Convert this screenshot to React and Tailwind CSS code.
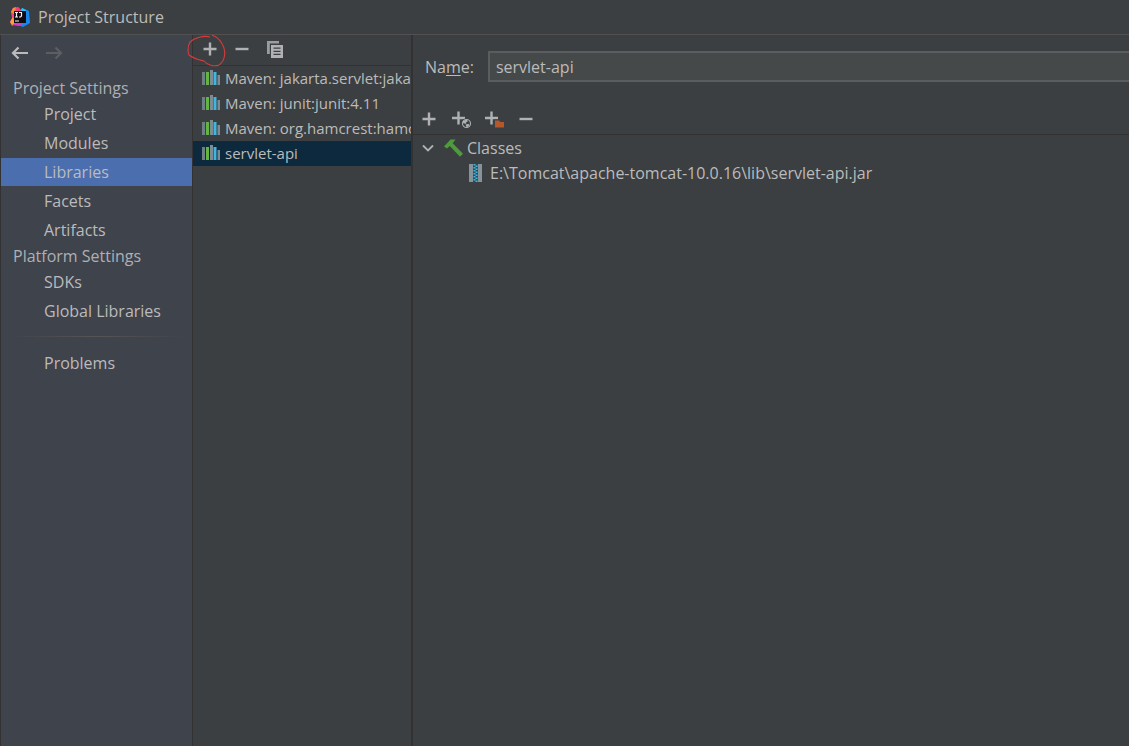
import React, { useState } from "react";
import clsx from "clsx";

const projectSettings = ["Project", "Modules", "Libraries", "Facets", "Artifacts"];
const platformSettings = ["SDKs", "Global Libraries"];
const libraries = [
    "Maven: jakarta.servlet:jakarta.servlet-api:5.0.0",
    "Maven: junit:junit:4.11",
    "Maven: org.hamcrest:hamcrest-core:1.3",
    "servlet-api",
];

function Logo() {
    return (
        <svg width="20" height="20" viewBox="0 0 20 20" aria-hidden="true">
            <path d="M1 5 L3 1 L8 0 L12 4 L9 16 L2 19 L0 15 L2 11 Z" fill="#f0468c" />
            <path d="M1 5 L3 1 L6 0 L4 7 Z" fill="#fc8a3c" />
            <path d="M3 10 L0 15 L2 18 L5 16 Z" fill="#f9a13a" />
            <path d="M8 0 L12 5 L4 8 Z" fill="#fb3a75" />
            <path d="M12 1 L19 4 L20 16 L13 20 L5 17 L9 8 Z" fill="#1687ee" />
            <path d="M12 1 L16 3 L16 5 L10 5 Z" fill="#24c4f5" />
            <path d="M5 16 L14 16 L9 19 L3 18 Z" fill="#d63bc8" />
            <path d="M4 4 H16 V16 H4 Z" fill="#120b12" />
            <path d="M5 5.5 H8 M6.5 5.5 V10 M5 10 H8 M9 5.5 H12 M11.5 5.5 V9 L10.5 10 H9 M5 14 H9" fill="none" stroke="#f4f4f4" strokeWidth="1.2" />
        </svg>
    );
}

function Arrow({ flip }) {
    return (
        <svg width="18" height="14" viewBox="0 0 18 14" className={flip ? "rotate-180" : ""} aria-hidden="true">
            <path d="M17 7 H2 M7.5 1.5 L2 7 L7.5 12.5" fill="none" stroke="currentColor" strokeWidth="2.2" />
        </svg>
    );
}

function Plus() {
    return (
        <svg width="14" height="14" viewBox="0 0 14 14" aria-hidden="true">
            <path d="M0.5 7 H13.5 M7 0.5 V13.5" stroke="#afb1b3" strokeWidth="2.4" />
        </svg>
    );
}

function Minus() {
    return (
        <svg width="14" height="14" viewBox="0 0 14 14" aria-hidden="true">
            <path d="M0.5 7 H13.5" stroke="#afb1b3" strokeWidth="2.4" />
        </svg>
    );
}

function Copy() {
    return (
        <svg width="16" height="17" viewBox="0 0 16 17" aria-hidden="true">
            <path d="M0 0 H12 V2.5 H2.8 V13 H0 Z" fill="#9a9da0" />
            <path d="M4 4 H16 V17 H4 Z" fill="#afb1b3" />
            <path d="M6.5 7.2 H13.5 M6.5 10.3 H13.5 M6.5 13.4 H13.5" stroke="#3c3f41" strokeWidth="1.3" />
        </svg>
    );
}

function PlusGlobe() {
    return (
        <svg width="20" height="20" viewBox="0 0 20 20" aria-hidden="true">
            <path d="M0 9 H13 M6.5 2.5 V15.5" stroke="#afb1b3" strokeWidth="2.4" />
            <circle cx="14.5" cy="14.5" r="5.2" fill="#3c3f41" />
            <circle cx="14.5" cy="14.5" r="4" fill="none" stroke="#afb1b3" strokeWidth="1.1" />
            <path d="M11 12 L14.5 10.6 L16 12 L14 13.4 L14.3 14.7 L12.4 14.5 L11 13.9 Z M13.6 15.5 L16.5 15.1 L17.6 16.1 L15.2 18.3 L14.2 17.5 Z" fill="#afb1b3" />
        </svg>
    );
}

function PlusFolder() {
    return (
        <svg width="20" height="20" viewBox="0 0 20 20" aria-hidden="true">
            <path d="M0 9 H13 M6.5 2.5 V15.5" stroke="#afb1b3" strokeWidth="2.4" />
            <path d="M9 10.5 H15 L16 12 H20 V20 H9 Z" fill="#3c3f41" />
            <path d="M10 11.5 H14 L15.5 13 H19 V18.5 H10 Z" fill="#b3572c" />
        </svg>
    );
}

function Books() {
    return (
        <svg width="18" height="16" viewBox="0 0 18 16" className="shrink-0" aria-hidden="true">
            <path d="M0 2 H3 V15 H0 Z" fill="#6e7d86" />
            <path d="M4 2 H7 V15 H4 Z" fill="#62b543" />
            <path d="M8 0 H11 V15 H8 Z" fill="#7f8b92" />
            <path d="M11.5 2 H14.5 V15 H11.5 Z" fill="#40b6e0" />
            <path d="M15.5 5 H18 V15 H15.5 Z" fill="#7f8b92" />
        </svg>
    );
}

function Hammer() {
    return (
        <svg width="19" height="18" viewBox="0 0 19 18" aria-hidden="true">
            <path d="M0 7.5 L6.5 0.5 H11.5 L8.7 4.2 L19 14.8 L16 17.7 L5.8 7 L3 9.6 Z" fill="#4f9a3d" />
        </svg>
    );
}

function Archive() {
    return (
        <svg width="13" height="18" viewBox="0 0 13 18" aria-hidden="true">
            <path d="M0 0 H4 V18 H0 Z M9 0 H13 V18 H9 Z" fill="#87939a" />
            <path d="M4 0 H9 V18 H4 Z" fill="#27505f" />
            <path d="M5.5 0 V18" stroke="#40b6e0" strokeWidth="2" strokeDasharray="1.5 1.5" />
            <path d="M7.5 1.5 V18" stroke="#40b6e0" strokeWidth="2" strokeDasharray="1.5 1.5" />
        </svg>
    );
}

function NavItem({ label, selected, onSelect }) {
    return (
        <button
            type="button"
            onClick={() => onSelect(label)}
            className={clsx("flex h-7 w-full items-center pl-[43px] text-left", selected === label && "bg-[#4b6eaf]")}
        >
            {label}
        </button>
    );
}

export default function App() {
    const [section, setSection] = useState("Libraries");
    const [library, setLibrary] = useState("servlet-api");
    const [name, setName] = useState("servlet-api");

    return (
        <div className="flex min-h-screen flex-col bg-[#3c3f41] font-['Open_Sans','Noto_Sans',sans-serif] text-base leading-6 text-[#bbbbbb]">
            <header className="flex h-[35px] items-center gap-2 border-b border-[#515151] pl-2.5">
                <Logo />
                <h1>Project Structure</h1>
            </header>

            <div className="flex flex-1">
                <nav className="w-[193px] shrink-0 border-x border-[#323232] bg-[#3f434c]">
                    <div className="flex h-[41px] items-start gap-4 pt-[11px] pl-2.5">
                        <button type="button" aria-label="Back" className="text-[#bbbbbb]"><Arrow /></button>
                        <button type="button" aria-label="Forward" className="text-[#5c5e61]"><Arrow flip /></button>
                    </div>
                    <h2 className="flex h-6 items-center pl-3 text-[#adb0b5]">Project Settings</h2>
                    <div className="flex flex-col gap-px">
                        {projectSettings.map((label) => (
                            <NavItem key={label} label={label} selected={section} onSelect={setSection} />
                        ))}
                    </div>
                    <h2 className="flex h-6 items-center pl-3 text-[#adb0b5]">Platform Settings</h2>
                    <div className="flex flex-col gap-px">
                        {platformSettings.map((label) => (
                            <NavItem key={label} label={label} selected={section} onSelect={setSection} />
                        ))}
                    </div>
                    <div className="mx-2 mt-[11px] mb-3 h-px bg-linear-to-r from-transparent via-[#555555] to-transparent" />
                    <NavItem label="Problems" selected={section} onSelect={setSection} />
                </nav>

                <section className="w-[220px] shrink-0 border-r-2 border-[#323232]">
                    <div className="relative flex h-[31px] items-center gap-[18px] border-b border-[#323232] pb-0.5 pl-2.5">
                        <button type="button" aria-label="Add library"><Plus /></button>
                        <button type="button" aria-label="Remove library"><Minus /></button>
                        <button type="button" aria-label="Copy library"><Copy /></button>
                        {/* hand-drawn ring around the add button */}
                        <svg width="40" height="34" viewBox="0 0 40 34" className="pointer-events-none absolute -top-px -left-1.5" aria-hidden="true">
                            <path d="M23 3 C17 1 7 4 3 8 C0 13 1 19 2 21 C7 25 13 26 17 27 C20 31 27 33 32 31 C37 28 39 20 37 14 C35 8 30 3 25 1" fill="none" stroke="#d93a3a" strokeWidth="1.1" />
                        </svg>
                    </div>
                    <ul className="text-[15px]">
                        {libraries.map((item) => (
                            <li key={item}>
                                <button
                                    type="button"
                                    onClick={() => setLibrary(item)}
                                    className={clsx("flex h-[25px] w-full items-center gap-[5px] overflow-hidden pb-0.5 pl-[9px] whitespace-nowrap", library === item && "bg-[#0d293e]")}
                                >
                                    <Books />
                                    {item}
                                </button>
                            </li>
                        ))}
                    </ul>
                </section>

                <main className="min-w-0 flex-1">
                    <div className="flex items-center gap-[14px] pt-4 pl-3">
                        <label htmlFor="library-name">
                            Na<u className="underline-offset-2">m</u>e:
                        </label>
                        <input
                            id="library-name"
                            value={name}
                            onChange={(e) => setName(e.target.value)}
                            className="h-[31px] min-w-0 flex-1 border-2 border-r-0 border-[#5a5c5d] bg-[#45494a] px-1.5 outline-none"
                        />
                    </div>
                    <div className="mt-5 flex h-[33px] items-center border-b border-[#323232] pt-0.5 pl-[9px]">
                        <button type="button" aria-label="Add" className="mr-4"><Plus /></button>
                        <button type="button" aria-label="Add from URL" className="mr-[13px]"><PlusGlobe /></button>
                        <button type="button" aria-label="Add excluded folder" className="mr-[14px]"><PlusFolder /></button>
                        <button type="button" aria-label="Remove"><Minus /></button>
                    </div>
                    <div className="flex h-[25px] items-center pl-[9px]">
                        <button type="button" aria-label="Collapse Classes" className="mr-[10px]">
                            <svg width="12" height="8" viewBox="0 0 12 8" aria-hidden="true">
                                <path d="M1 1.5 L6 6.5 L11 1.5" fill="none" stroke="#afb1b3" strokeWidth="1.8" />
                            </svg>
                        </button>
                        <Hammer />
                        <span className="ml-1">Classes</span>
                    </div>
                    <div className="flex h-[25px] items-center gap-2 pl-14">
                        <Archive />
                        <span>E:\Tomcat\apache-tomcat-10.0.16\lib\servlet-api.jar</span>
                    </div>
                </main>
            </div>
        </div>
    );
}
